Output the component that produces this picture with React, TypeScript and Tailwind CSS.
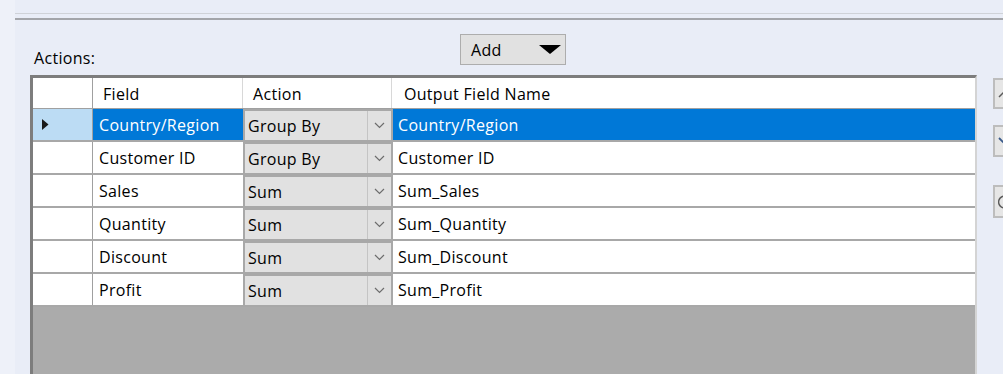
import React from "react";

const rows = [
  { field: "Country/Region", action: "Group By", out: "Country/Region", sel: true },
  { field: "Customer ID", action: "Group By", out: "Customer ID" },
  { field: "Sales", action: "Sum", out: "Sum_Sales" },
  { field: "Quantity", action: "Sum", out: "Sum_Quantity" },
  { field: "Discount", action: "Sum", out: "Sum_Discount" },
  { field: "Profit", action: "Sum", out: "Sum_Profit" },
];

function Chevron() {
  return (
    <svg width="11" height="7" viewBox="0 0 11 7">
      <path d="M1 1 L5.5 5.5 L10 1" fill="none" stroke="#6d6d6d" strokeWidth="1.2" />
    </svg>
  );
}

export default function App() {
  return (
    <div
      className="w-[1003px] h-[374px] overflow-hidden flex bg-[#e9edf7] text-black tracking-[0.3px]"
      style={{ fontFamily: '"Open Sans", "Noto Sans", sans-serif' }}
    >
      <div className="w-[15px] shrink-0 bg-[#eef1f9]" />
      <div className="flex-1 flex flex-col">
        <div className="h-[13px]" />
        <div className="h-px bg-[#cfd2d8]" />
        <div className="h-[4px]" />
        <div className="h-[2px] bg-[#a3a5aa]" />
        <div className="flex items-end h-[45px]">
          <div className="ml-[19px] w-[426px] text-[16px] leading-[18px] mb-[-2px]">Actions:</div>
          <div className="w-[106px] h-[31px] border border-[#adadad] bg-[#e1e1e1] flex items-center pl-[10px] pr-[4px] text-[16px]">
            <span>Add</span>
            <svg className="ml-auto" width="22" height="10" viewBox="0 0 22 10">
              <path d="M0 0 H22 L11 9 Z" fill="#000" />
            </svg>
          </div>
        </div>
        <div className="h-[10px]" />
        <div className="flex flex-1">
          <div className="ml-[15px] w-[947px] flex flex-col border-l-[3px] border-t-[3px] border-l-[#7d7d7d] border-t-[#7d7d7d] border-r-2 border-r-[#d4d4d4] bg-[#ababab]">
            <div className="flex h-[31px] bg-white border-b border-[#a0a0a0] text-[16px]">
              <div className="w-[60px] border-r border-[#a0a0a0]" />
              <div className="w-[150px] border-r border-[#d8d8d8] flex items-center pl-[10px] pt-[2px]">Field</div>
              <div className="w-[149px] border-r border-[#d8d8d8] flex items-center pl-[10px] pt-[2px]">Action</div>
              <div className="flex-1 flex items-center pl-[12px] pt-[2px]">Output Field Name</div>
            </div>
            {rows.map((r, i) => (
              <div key={i} className="flex h-[33px] text-[16px] border-b-2 border-[#a8a8a8]">
                <div
                  className={`w-[60px] border-r border-[#a0a0a0] flex items-center pl-[9px] ${
                    r.sel ? "bg-[#bcdcf4]" : "bg-white"
                  }`}
                >
                  {r.sel && (
                    <svg width="7" height="11" viewBox="0 0 7 11">
                      <path d="M0 0 L6.5 5.5 L0 11 Z" fill="#1a1a1a" />
                    </svg>
                  )}
                </div>
                <div
                  className={`w-[150px] flex items-center pl-[6px] pt-[1px] ${
                    r.sel ? "bg-[#0078d7] text-white" : "bg-white"
                  }`}
                >
                  {r.field}
                </div>
                <div className="w-[150px] flex border-2 border-b-0 border-[#a8a8a8] bg-[#e1e1e1]">
                  <div className="flex-1 flex items-center pl-[3px] pt-[1px]">{r.action}</div>
                  <div className="w-[24px] border-l border-[#c4c4c4] flex items-center justify-center">
                    <Chevron />
                  </div>
                </div>
                <div
                  className={`flex-1 flex items-center pl-[5px] pt-[1px] ${
                    r.sel ? "bg-[#0078d7] text-white" : "bg-white"
                  }`}
                >
                  {r.out}
                </div>
              </div>
            ))}
            <div className="flex-1 bg-[#ababab]" />
          </div>
          <div className="ml-[16px] flex flex-col pt-[3px] gap-0">
            <div className="w-[30px] h-[31px] border-2 border-[#bdbdbd] bg-[#e6e6e6] flex items-center pl-[3px]">
              <svg width="12" height="8" viewBox="0 0 12 8">
                <path d="M1 7 L6 2 L11 7" fill="none" stroke="#5a5a5a" strokeWidth="1.5" />
              </svg>
            </div>
            <div className="mt-[16px] w-[30px] h-[32px] border-2 border-[#bdbdbd] bg-[#e6e6e6] flex items-center pl-[3px]">
              <svg width="12" height="8" viewBox="0 0 12 8">
                <path d="M1 1 L6 6 L11 1" fill="none" stroke="#3a5a8a" strokeWidth="1.8" />
              </svg>
            </div>
            <div className="mt-[28px] w-[30px] h-[33px] border-2 border-[#bdbdbd] bg-[#e6e6e6] flex items-center pl-[3px]">
              <svg width="12" height="14" viewBox="0 0 12 14">
                <path d="M10 2 A6 6 0 1 0 10 12" fill="none" stroke="#5a5a5a" strokeWidth="1.6" />
              </svg>
            </div>
          </div>
        </div>
      </div>
    </div>
  );
}
